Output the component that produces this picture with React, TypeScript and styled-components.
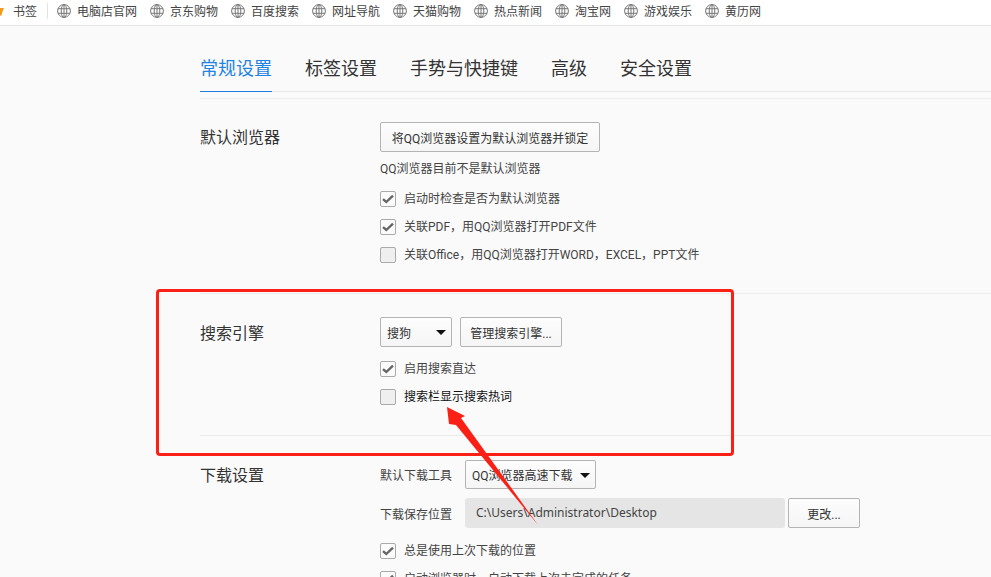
import React from "react";
import styled, { createGlobalStyle } from "styled-components";

const Global = createGlobalStyle`
  html, body { margin: 0; padding: 0; background: #fafafa; }
  * { box-sizing: border-box; }
`;

const Page = styled.div`
  position: relative;
  width: 991px;
  height: 577px;
  overflow: hidden;
  background: #fafafa;
  color: #333;
  font-family: Roboto, "Noto Sans CJK SC", sans-serif;
  font-size: 12px;
`;

const Bar = styled.div`
  display: flex;
  align-items: center;
  height: 26px;
  padding: 0 0 3px 0;
  background: #fff;
  border-bottom: 1px solid #e3e3e3;
`;

const StarWrap = styled.span`
  display: block;
  width: 13px;
  height: 12px;
  overflow: hidden;
  flex: none;
`;

const BarLabel = styled.span`
  width: 34px;
  padding-top: 2px;
  line-height: 16px;
  white-space: nowrap;
  color: #444;
`;

const BarDivider = styled.span`
  width: 1px;
  height: 16px;
  background: #e2e2e2;
  margin-right: 9px;
  flex: none;
`;

const Bookmark = styled.span<{ $w: number }>`
  display: flex;
  align-items: center;
  gap: 6px;
  flex: none;
  width: ${(p) => p.$w}px;
  white-space: nowrap;
  color: #444;
  svg { flex: none; }
`;

const BookmarkText = styled.span`
  padding-top: 2px;
  line-height: 16px;
`;

const Content = styled.main`
  padding-left: 200px;
`;

const Tabs = styled.nav`
  display: flex;
  height: 66px;
  padding-top: 27px;
  border-bottom: 1px solid #e8e8e8;
`;

const Tab = styled.span<{ $active?: boolean; $mr: number }>`
  height: 39px;
  margin-right: ${(p) => p.$mr}px;
  font-size: 18px;
  line-height: 32px;
  white-space: nowrap;
  color: ${(p) => (p.$active ? "#2283e2" : "#333")};
  border-bottom: ${(p) => (p.$active ? "1px solid #1b7fe0" : "none")};
`;

const SubLine = styled.div`
  height: 7px;
  border-bottom: 1px solid #ececec;
`;

const Section = styled.section<{ $h: number; $pt: number; $line?: boolean }>`
  display: grid;
  grid-template-columns: 180px 1fr;
  height: ${(p) => p.$h}px;
  padding-top: ${(p) => p.$pt}px;
  border-bottom: ${(p) => (p.$line ? "1px solid #ececec" : "none")};
`;

const Title = styled.h2<{ $lh?: number }>`
  margin: 0;
  font-size: 16px;
  font-weight: 400;
  line-height: ${(p) => p.$lh ?? 32}px;
  color: #333;
`;

const Controls = styled.div`
  display: flex;
  flex-direction: column;
  align-items: flex-start;
`;

const Row = styled.div<{ $mb?: number; $gap?: number }>`
  display: flex;
  align-items: center;
  gap: ${(p) => p.$gap ?? 8}px;
  margin-bottom: ${(p) => p.$mb ?? 0}px;
`;

const Button = styled.button<{ $w: number }>`
  width: ${(p) => p.$w}px;
  height: 30px;
  padding: 0;
  border: 1px solid #b4b4b4;
  border-radius: 2px;
  background: linear-gradient(#fdfdfd, #f5f5f5);
  font: inherit;
  color: #333;
  white-space: nowrap;
`;

const Select = styled.div<{ $w: number; $h?: number }>`
  position: relative;
  display: flex;
  align-items: center;
  width: ${(p) => p.$w}px;
  height: ${(p) => p.$h ?? 30}px;
  padding: 0 0 0 6px;
  border: 1px solid #b4b4b4;
  border-radius: 2px;
  background: linear-gradient(#fdfdfd, #f5f5f5);
  white-space: nowrap;
  &::after {
    content: "";
    position: absolute;
    right: 5px;
    top: 50%;
    margin-top: -2px;
    border-left: 5px solid transparent;
    border-right: 5px solid transparent;
    border-top: 5px solid #111;
  }
`;

const Note = styled.div`
  line-height: 16px;
  margin: 9px 0 14px;
  color: #444;
`;

const CheckRow = styled.label<{ $mb?: number; $dark?: boolean }>`
  display: flex;
  align-items: center;
  gap: 8px;
  height: 16px;
  margin-bottom: ${(p) => p.$mb ?? 12}px;
  white-space: nowrap;
  color: ${(p) => (p.$dark ? "#111" : "#444")};
`;

const CheckText = styled.span`
  line-height: 14px;
`;

const Box = styled.span<{ $on?: boolean }>`
  display: flex;
  align-items: center;
  justify-content: center;
  width: 16px;
  height: 16px;
  flex: none;
  border: 1px solid #aaa;
  border-radius: 2px;
  background: ${(p) => (p.$on ? "#fbfbfb" : "#efefef")};
`;

const FieldLabel = styled.span`
  width: 85px;
  white-space: nowrap;
  color: #444;
`;

const PathBox = styled.div`
  display: flex;
  align-items: center;
  width: 320px;
  height: 30px;
  padding: 0 0 2px 11px;
  margin-right: 3px;
  border-radius: 3px;
  background: #e5e5e5;
  font-family: "Noto Sans", "Noto Sans CJK SC", sans-serif;
  color: #444;
`;

const RedFrame = styled.div`
  position: absolute;
  left: 156px;
  top: 289px;
  width: 578px;
  height: 167px;
  border: 3px solid #fb2016;
  border-radius: 4px;
  pointer-events: none;
`;

const Arrow = styled.svg`
  position: absolute;
  left: 0;
  top: 0;
  pointer-events: none;
`;

const Globe = () => (
  <svg width="14" height="14" viewBox="0 0 14 14" fill="none" stroke="#777" strokeWidth="1">
    <circle cx="7" cy="7" r="6.4" />
    <ellipse cx="7" cy="7" rx="2.8" ry="6.4" />
    <path d="M1 4.7h12M1 9.3h12M7 .6v12.8" />
  </svg>
);

const Star = () => (
  <StarWrap>
    <svg width="4" height="12" viewBox="0 0 4 12">
      <path d="M0 3H4L2.6 6.2 1.6 10 0 11Z" fill="#f39a1b" />
    </svg>
  </StarWrap>
);

const Check = () => (
  <svg width="12" height="10" viewBox="0 0 12 10" fill="none" stroke="#666" strokeWidth="2.4">
    <path d="M1 5.2 4.3 8 11 1.6" />
  </svg>
);

const Checkbox = ({ on, text, mb, dark }: { on?: boolean; text: string; mb?: number; dark?: boolean }) => (
  <CheckRow $mb={mb} $dark={dark}>
    <Box $on={on}>{on && <Check />}</Box>
    <CheckText>{text}</CheckText>
  </CheckRow>
);

const bookmarks: [string, number][] = [
  ["电脑店官网", 93],
  ["京东购物", 81],
  ["百度搜索", 81],
  ["网址导航", 81],
  ["天猫购物", 81],
  ["热点新闻", 81],
  ["淘宝网", 69],
  ["游戏娱乐", 81],
  ["黄历网", 70],
];

const tabs: [string, number][] = [
  ["常规设置", 33],
  ["标签设置", 33],
  ["手势与快捷键", 33],
  ["高级", 33],
  ["安全设置", 0],
];

export default function App() {
  return (
    <Page>
      <Global />
      <Bar>
        <Star />
        <BarLabel>书签</BarLabel>
        <BarDivider />
        {bookmarks.map(([name, w]) => (
          <Bookmark key={name} $w={w}>
            <Globe />
            <BookmarkText>{name}</BookmarkText>
          </Bookmark>
        ))}
      </Bar>
      <Content>
        <Tabs>
          {tabs.map(([name, mr], i) => (
            <Tab key={name} $active={i === 0} $mr={mr}>
              {name}
            </Tab>
          ))}
        </Tabs>
        <SubLine />
        <Section $h={195} $pt={23} $line>
          <Title>默认浏览器</Title>
          <Controls>
            <Button $w={220}>将QQ浏览器设置为默认浏览器并锁定</Button>
            <Note>QQ浏览器目前不是默认浏览器</Note>
            <Checkbox on text="启动时检查是否为默认浏览器" />
            <Checkbox on text="关联PDF，用QQ浏览器打开PDF文件" />
            <Checkbox text="关联Office，用QQ浏览器打开WORD，EXCEL，PPT文件" />
          </Controls>
        </Section>
        <Section $h={142} $pt={23} $line>
          <Title $lh={34}>搜索引擎</Title>
          <Controls>
            <Row $mb={14}>
              <Select $w={72}>搜狗</Select>
              <Button $w={102}>管理搜索引擎...</Button>
            </Row>
            <Checkbox on text="启用搜索直达" />
            <Checkbox dark text="搜索栏显示搜索热词" />
          </Controls>
        </Section>
        <Section $h={141} $pt={24}>
          <Title>下载设置</Title>
          <Controls>
            <Row $mb={9} $gap={0}>
              <FieldLabel>默认下载工具</FieldLabel>
              <Select $w={131} $h={29}>QQ浏览器高速下载</Select>
            </Row>
            <Row $mb={15} $gap={0}>
              <FieldLabel>下载保存位置</FieldLabel>
              <PathBox>C:\Users\Administrator\Desktop</PathBox>
              <Button $w={72}>更改...</Button>
            </Row>
            <Checkbox on text="总是使用上次下载的位置" />
            <Checkbox on text="启动浏览器时，自动下载上次未完成的任务" />
          </Controls>
        </Section>
      </Content>
      <RedFrame />
      <Arrow width="991" height="577" viewBox="0 0 991 577">
        <polygon points="447,407 465,416 461,418 538,525 456,425 449,424" fill="#fb2016" />
      </Arrow>
    </Page>
  );
}
